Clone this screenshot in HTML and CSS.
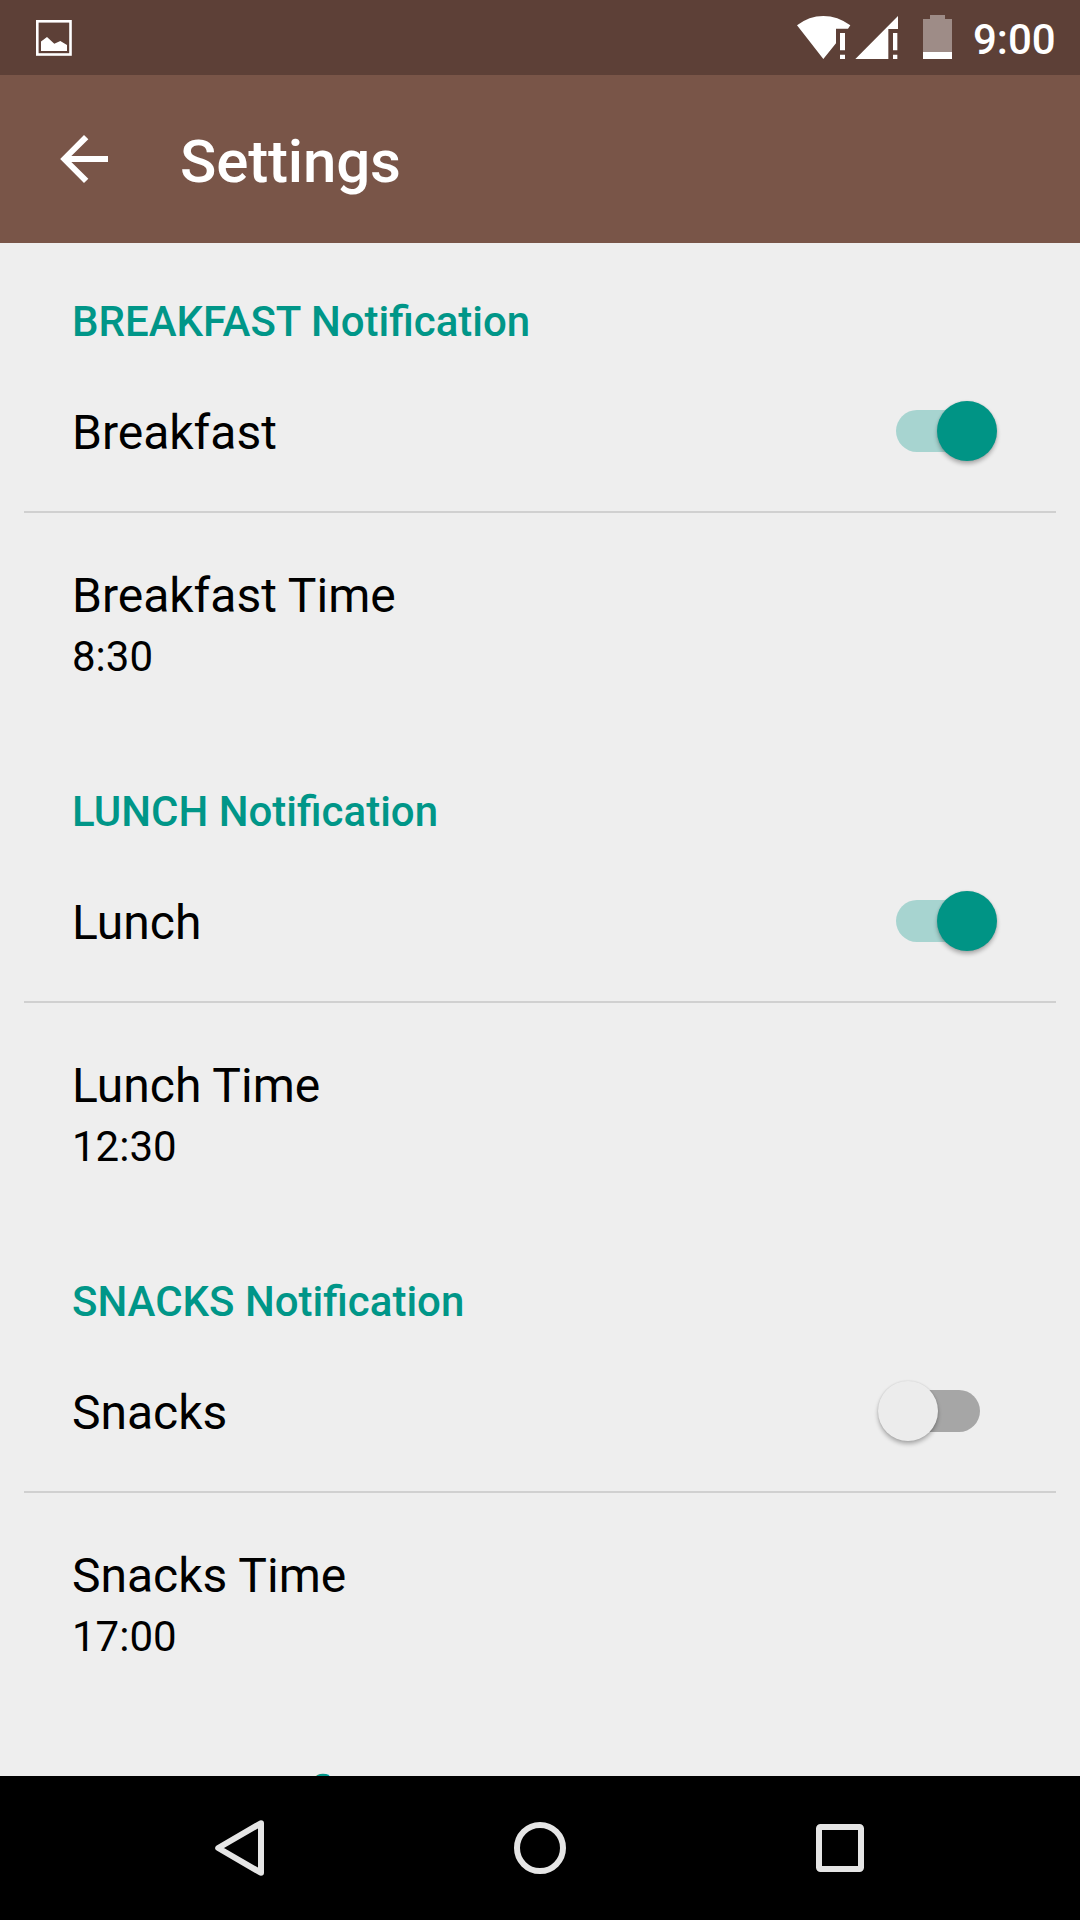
FILE: index.html
```html
<!DOCTYPE html>
<html lang="en">
<head>
<meta charset="utf-8">
<title>Settings</title>
<link rel="stylesheet" href="styles.css">
</head>
<body>
<div class="screen">
  <div class="status-bar">
    <svg class="picture-icon" viewBox="0 0 36 36"><rect x="1.3" y="1.3" width="33.2" height="33.2" fill="none" stroke="#fff" stroke-width="2.6"/><path fill="#fff" d="M5 21.5 11 17l7.3 6.7L24.3 21l6.7 4v6H5z"/></svg>
    <div class="status-right">
      <svg class="wifi-icon" viewBox="51 45 162 135"><path fill="#fff" d="M51 76Q87 48 130 48t81 28l-7 10.500h-36v43.500L130 177zM180 99h15v52h-15zM180 164h15v13h-15z"/></svg>
      <svg class="cell-icon" viewBox="225 45 129 135"><path fill="#fff" d="M354 48v39h-29v90h-99zM339 99h13v52h-13zM339 164h13v13h-13z"/></svg>
      <svg class="battery-icon" viewBox="429 45 87 135"><path fill="#9e8c87" d="M450 45h45v12h21v99h-87V57h21z"/><path fill="#fff" d="M429 156h87v21h-87z"/></svg>
      <span class="clock">9:00</span>
    </div>
  </div>
  <header class="toolbar">
    <svg class="back-arrow" viewBox="180 405 144 144"><path fill="#fff" d="m180.500 477 71.500-72 13 13-51 50h110v18H214l51 50-13 13z"/></svg>
    <h1 class="title">Settings</h1>
  </header>
  <main class="settings">
    <section class="group">
      <h2 class="group-title">BREAKFAST Notification</h2>
      <div class="row switch-row"><span class="label">Breakfast</span><span class="switch on"><span class="thumb"></span></span></div>
      <div class="row time-row"><span class="label">Breakfast Time</span><span class="value">8:30</span></div>
    </section>
    <section class="group">
      <h2 class="group-title">LUNCH Notification</h2>
      <div class="row switch-row"><span class="label">Lunch</span><span class="switch on"><span class="thumb"></span></span></div>
      <div class="row time-row"><span class="label">Lunch Time</span><span class="value">12:30</span></div>
    </section>
    <section class="group">
      <h2 class="group-title">SNACKS Notification</h2>
      <div class="row switch-row"><span class="label">Snacks</span><span class="switch"><span class="thumb"></span></span></div>
      <div class="row time-row"><span class="label">Snacks Time</span><span class="value">17:00</span></div>
    </section>
    <section class="group">
      <h2 class="group-title">DINNER Notification</h2>
    </section>
  </main>
  <nav class="nav-bar">
    <svg class="nav-icon" viewBox="0 0 60 60"><path d="M8.200 30 50.800 5.300h.200v49.400h-.200z"/></svg>
    <svg class="nav-icon" viewBox="0 0 60 60"><circle cx="30" cy="30" r="23"/></svg>
    <svg class="nav-icon" viewBox="0 0 60 60"><rect x="9" y="9" width="42" height="42" rx="1.500"/></svg>
  </nav>
</div>
</body>
</html>
```
FILE: styles.css
```css
* { box-sizing: border-box; }
body {
  margin: 0;
  font-family: Roboto, sans-serif;
  color: #000;
}
.screen {
  display: flex;
  flex-direction: column;
  width: 1080px;
  height: 1920px;
  overflow: hidden;
  background: #eee;
}
svg { display: block; flex: none; }

.status-bar {
  display: flex;
  justify-content: space-between;
  flex: none;
  height: 75px;
  padding: 15px 24px 0 36px;
  background: #5d4037;
  color: #fff;
}
.picture-icon { width: 36px; height: 36px; margin-top: 5px; }
.status-right { display: flex; }
.wifi-icon { width: 54px; height: 45px; margin-right: 4px; }
.cell-icon { width: 43px; height: 45px; margin-right: 25px; }
.battery-icon { width: 29px; height: 45px; margin-right: 21px; }
.clock { width: 83px; font-size: 42px; line-height: 50px; font-weight: 500; }

.toolbar {
  display: flex;
  flex: none;
  height: 168px;
  padding: 51px 60px 0;
  background: #795548;
  color: #fff;
}
.back-arrow { width: 48px; height: 48px; margin: 9px 72px 0 0; }
.title { margin: 0; font-size: 60px; line-height: 72px; font-weight: 500; letter-spacing: -.15px; }

.settings { flex: 1; min-height: 0; overflow: hidden; }
.group { height: 490px; padding: 54px 24px 0; }
.group-title {
  margin: 0;
  padding: 0 48px;
  font-size: 42px;
  line-height: 50px;
  font-weight: 500;
  color: #009688;
}
.row { display: flex; padding: 0 48px; }
.switch-row {
  justify-content: space-between;
  height: 166px;
  padding-top: 58px;
  padding-right: 76px;
  border-bottom: 2px solid #d0d0d0;
}
.time-row { flex-direction: column; gap: 8px; padding-top: 55px; }
.label { font-size: 48px; line-height: 56px; }
.value { font-size: 42px; line-height: 50px; }

.switch {
  position: relative;
  width: 84px;
  height: 42px;
  margin-top: 5px;
  border-radius: 21px;
  background: #a6a6a6;
}
.thumb {
  position: absolute;
  top: -9.5px;
  left: -18px;
  width: 60px;
  height: 60px;
  border-radius: 50%;
  background: #ececec;
  box-shadow: 0 3px 4px rgba(0, 0, 0, .28), 0 0 2px rgba(0, 0, 0, .12);
}
.switch.on { background: #a7d4d0; }
.switch.on .thumb { left: 41px; background: #009485; }

.nav-bar {
  display: flex;
  justify-content: center;
  align-items: center;
  gap: 240px;
  flex: none;
  height: 144px;
  background: #000;
}
.nav-icon {
  width: 60px;
  height: 60px;
  fill: none;
  stroke: #e5e5e5;
  stroke-width: 6;
  stroke-linejoin: round;
}
```
